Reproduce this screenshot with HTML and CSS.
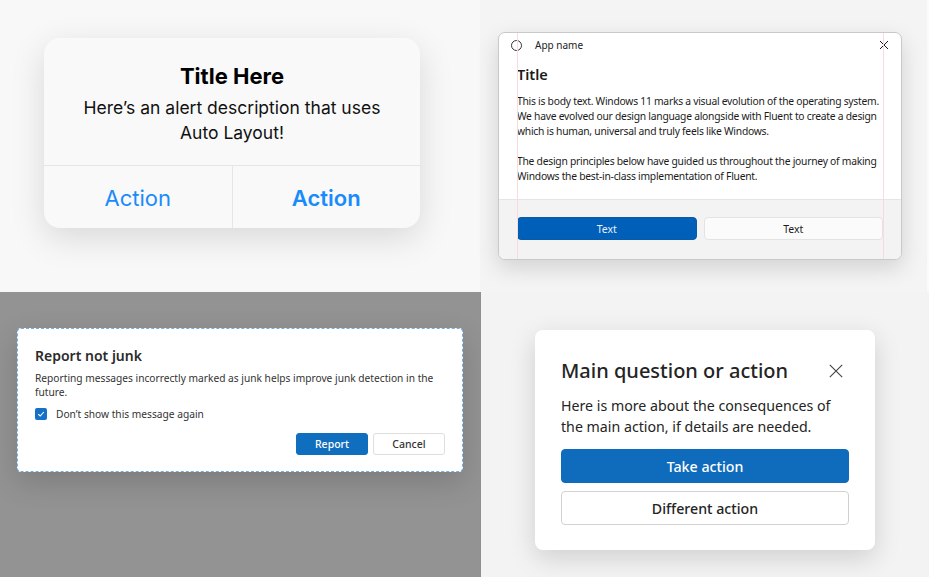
FILE: index.html
```html
<!DOCTYPE html>
<html lang="en">
  <head>
    <meta charset="UTF-8" />
    <meta name="viewport" content="width=device-width, initial-scale=1.0" />
    <title>Dialog samples</title>
    <link rel="stylesheet" href="styles.css">
  </head>
  <body>
    <div class="board">
      <!-- iOS style alert -->
      <section class="cell cell-ios">
        <div class="ios-alert">
          <div class="ios-body">
            <h2 class="ios-title">Title Here</h2>
            <p class="ios-text">Here’s an alert description that uses Auto Layout!</p>
          </div>
          <div class="ios-actions">
            <button class="ios-btn">Action</button>
            <button class="ios-btn ios-btn-bold">Action</button>
          </div>
        </div>
      </section>

      <!-- Windows 11 content dialog -->
      <section class="cell cell-win">
        <div class="win-dialog">
          <span class="guide guide-left"></span>
          <span class="guide guide-right"></span>
          <div class="win-titlebar">
            <span class="win-icon"></span>
            <span class="win-appname">App name</span>
            <svg class="win-close" width="10" height="10" viewBox="0 0 10 10">
              <path d="M1 1 L9 9 M9 1 L1 9" stroke="#1a1a1a" stroke-width="1" fill="none" />
            </svg>
          </div>
          <div class="win-content">
            <h2 class="win-title">Title</h2>
            <p class="win-text">This is body text. Windows 11 marks a visual evolution of the operating system. We have evolved our design language alongside with Fluent to create a design which is human, universal and truly feels like Windows.</p>
            <p class="win-text">The design principles below have guided us throughout the journey of making Windows the best-in-class implementation of Fluent.</p>
          </div>
          <div class="win-footer">
            <button class="win-btn win-btn-primary">Text</button>
            <button class="win-btn">Text</button>
          </div>
        </div>
      </section>

      <!-- Outlook style dialog -->
      <section class="cell cell-junk">
        <div class="junk-dialog">
          <h2 class="junk-title">Report not junk</h2>
          <p class="junk-text">Reporting messages incorrectly marked as junk helps improve junk detection in the future.</p>
          <label class="junk-check">
            <span class="checkbox">
              <svg width="8" height="8" viewBox="0 0 8 8">
                <path d="M1.2 4.2 L3.2 6 L6.8 2" stroke="#fff" stroke-width="1.1" fill="none" />
              </svg>
            </span>
            Don’t show this message again
          </label>
          <div class="junk-actions">
            <button class="junk-btn junk-btn-primary">Report</button>
            <button class="junk-btn">Cancel</button>
          </div>
        </div>
      </section>

      <!-- Fluent 2 dialog -->
      <section class="cell cell-fluent">
        <div class="fl-dialog">
          <div class="fl-head">
            <h2 class="fl-title">Main question or action</h2>
            <svg class="fl-close" width="14" height="14" viewBox="0 0 14 14">
              <path d="M0.8 0.8 L13.2 13.2 M13.2 0.8 L0.8 13.2" stroke="#424242" stroke-width="1.1" fill="none" />
            </svg>
          </div>
          <p class="fl-text">Here is more about the consequences of the main action, if details are needed.</p>
          <button class="fl-btn fl-btn-primary">Take action</button>
          <button class="fl-btn">Different action</button>
        </div>
      </section>
    </div>
  </body>
</html>
```

FILE: styles.css
```css
* {
  box-sizing: border-box;
}
body {
  margin: 0;
  font-family: "Noto Sans", "Open Sans", sans-serif;
}
button {
  font-family: inherit;
  cursor: pointer;
}
h2,
p {
  margin: 0;
}
.board {
  display: grid;
  grid-template-columns: 480px 449px;
  grid-template-rows: 292px 285px;
  width: 929px;
  height: 577px;
  overflow: hidden;
}
.cell {
  position: relative;
}

/* iOS alert */
.cell-ios {
  background-color: #f8f8f8;
  padding: 38px 0 0 44px;
}
.ios-alert {
  width: 376px;
  height: 190px;
  background-color: #f9f9f9;
  border-radius: 16px;
  box-shadow: 0 10px 34px rgba(0, 0, 0, 0.13);
  display: flex;
  flex-direction: column;
  overflow: hidden;
  font-family: Inter, sans-serif;
}
.ios-body {
  flex: 1;
  padding: 24px 24px 0;
  text-align: center;
  border-bottom: 1px solid #e6e6e6;
}
.ios-title {
  font-size: 22px;
  line-height: 28px;
  font-weight: 700;
  color: #000;
  margin-bottom: 5px;
}
.ios-text {
  font-size: 17.5px;
  line-height: 25px;
  color: #111;
}
.ios-actions {
  display: flex;
  height: 62px;
}
.ios-btn {
  flex: 1;
  border: none;
  background: none;
  font-family: Inter, sans-serif;
  font-size: 22px;
  color: #1a8bfb;
  padding: 1px 0 0;
}
.ios-btn + .ios-btn {
  border-left: 1px solid #e6e6e6;
}
.ios-btn-bold {
  font-weight: 600;
}

/* Windows dialog */
.cell-win {
  background-color: #f4f4f4;
  padding: 32px 0 0 18px;
  border-right: 2px solid #fafafa;
}
.win-dialog {
  position: relative;
  width: 404px;
  height: 228px;
  background-color: #fff;
  border: 1px solid #c9c9c9;
  border-radius: 7px;
  box-shadow: 0 8px 22px rgba(0, 0, 0, 0.14);
  display: flex;
  flex-direction: column;
  overflow: hidden;
  color: #1b1b1b;
}
.guide {
  position: absolute;
  top: 0;
  bottom: 0;
  width: 1px;
  background-color: #f6dcdc;
}
.guide-left {
  left: 18px;
}
.guide-right {
  left: 384px;
}
.win-titlebar {
  display: flex;
  align-items: center;
  height: 25px;
  padding: 0 12px 0 12px;
  font-size: 10px;
}
.win-icon {
  width: 11px;
  height: 11px;
  border: 1px solid #333;
  border-radius: 50%;
  margin-right: 13px;
}
.win-appname {
  flex: 1;
  color: #222;
}
.win-content {
  flex: 1;
  padding: 5px 18px 0;
}
.win-title {
  font-size: 14.5px;
  line-height: 22px;
  font-weight: 600;
  margin-bottom: 9px;
}
.win-text {
  font-size: 10.3px;
  line-height: 15px;
  letter-spacing: -0.25px;
  margin-bottom: 15px;
}
.win-footer {
  height: 61px;
  background-color: #f3f3f3;
  border-top: 1px solid #e5e5e5;
  display: flex;
  align-items: center;
  gap: 7px;
  padding: 0 18px 1px;
}
.win-btn {
  flex: 1;
  height: 23px;
  border-radius: 4px;
  border: 1px solid #e3e3e3;
  background-color: #fbfbfb;
  font-size: 10.5px;
  color: #1b1b1b;
}
.win-btn-primary {
  background-color: #005fb8;
  border-color: #0a5aa8;
  color: #e8f0fa;
}

/* Report not junk */
.cell-junk {
  background-color: #939393;
  padding: 36px 0 0 17px;
}
.junk-dialog {
  width: 446px;
  height: 144px;
  background-color: #fff;
  border: 1px dashed #72aee0;
  border-radius: 4px;
  box-shadow: 0 10px 30px rgba(0, 0, 0, 0.16);
  padding: 17px 17px 0;
  color: #242424;
}
.junk-title {
  font-size: 14px;
  line-height: 20px;
  font-weight: 600;
  color: #2b2b2b;
  margin-bottom: 5px;
}
.junk-text {
  font-size: 10.2px;
  line-height: 14px;
  color: #333;
  margin-bottom: 8px;
}
.junk-check {
  display: flex;
  align-items: center;
  font-size: 10.2px;
  line-height: 14px;
  color: #333;
}
.checkbox {
  width: 12px;
  height: 12px;
  border-radius: 2px;
  background-color: #1770c8;
  display: flex;
  align-items: center;
  justify-content: center;
  margin-right: 9px;
}
.junk-actions {
  display: flex;
  justify-content: flex-end;
  gap: 5px;
  margin-top: 12px;
}
.junk-btn {
  width: 72px;
  height: 22px;
  border-radius: 3px;
  border: 1px solid #dedede;
  background-color: #fff;
  font-size: 10.5px;
  font-weight: 500;
  color: #333;
}
.junk-btn-primary {
  background-color: #106ebe;
  border-color: #106ebe;
  color: #fff;
}

/* Fluent dialog */
.cell-fluent {
  background-color: #f3f3f3;
  padding: 38px 0 0 54px;
  border-left: 1px solid #8f8f8f;
}
.fl-dialog {
  width: 340px;
  height: 220px;
  background-color: #fff;
  border-radius: 8px;
  box-shadow: 0 8px 26px rgba(0, 0, 0, 0.15);
  padding: 27px 26px 0;
  color: #242424;
}
.fl-head {
  display: flex;
  align-items: center;
  justify-content: space-between;
  margin-bottom: 10px;
}
.fl-title {
  font-size: 20px;
  line-height: 28px;
  font-weight: 500;
}
.fl-close {
  margin-right: 6px;
}
.fl-text {
  font-size: 14.2px;
  line-height: 21px;
  margin-bottom: 12px;
}
.fl-btn {
  display: block;
  width: 100%;
  height: 34px;
  border-radius: 4px;
  border: 1px solid #d1d1d1;
  background-color: #fff;
  font-size: 14.2px;
  font-weight: 500;
  color: #242424;
  margin-bottom: 8px;
}
.fl-btn-primary {
  background-color: #0f6cbd;
  border-color: #0f6cbd;
  color: #fff;
}
```
